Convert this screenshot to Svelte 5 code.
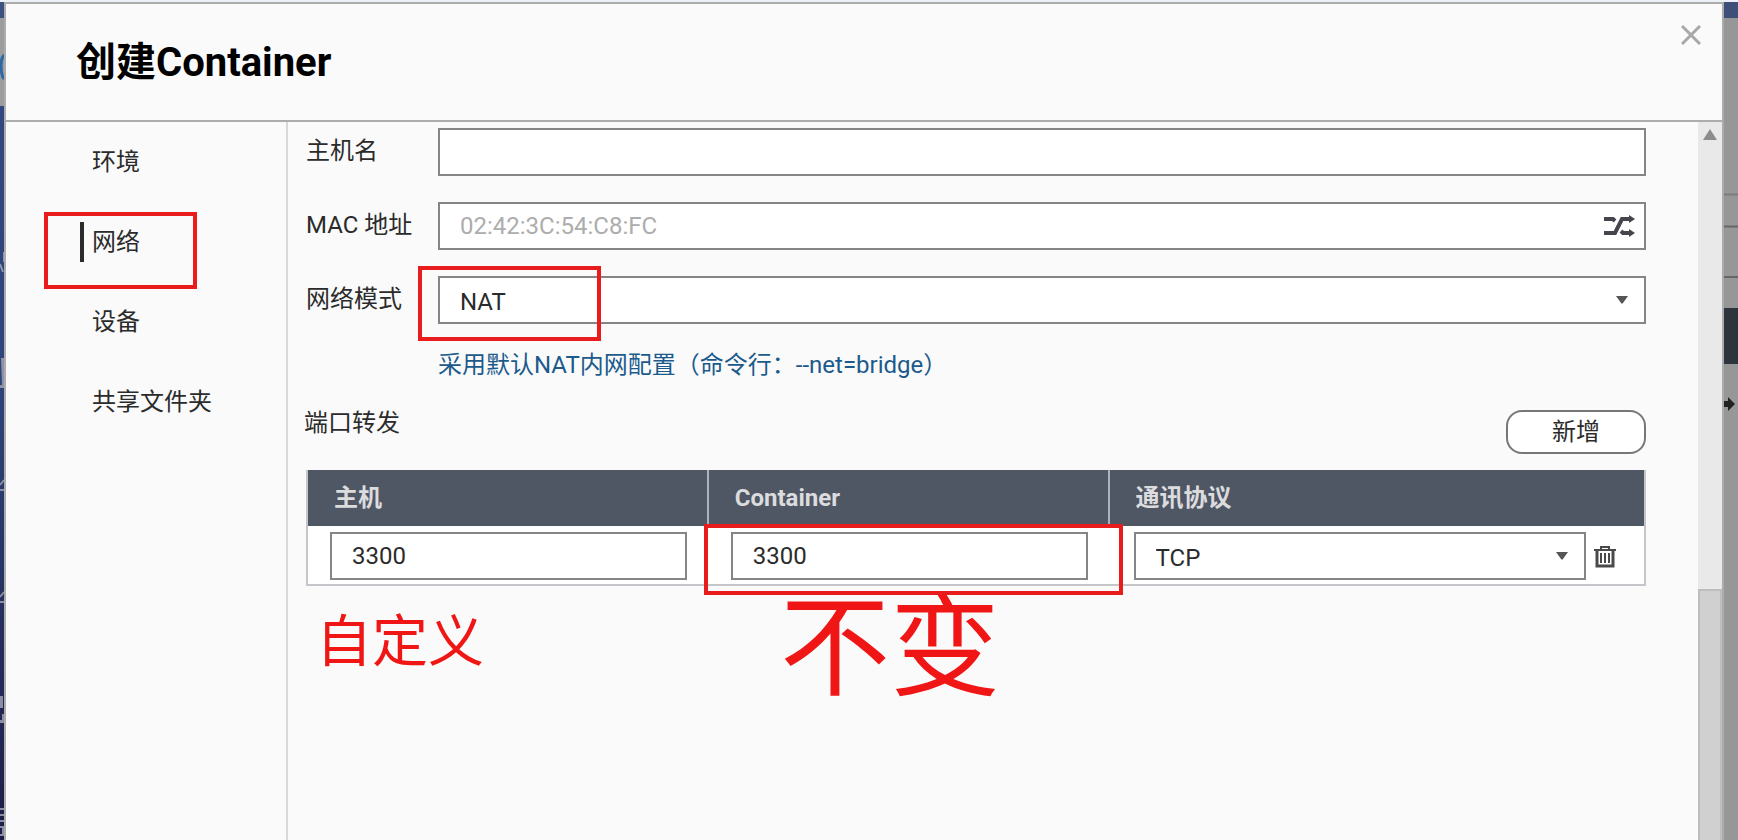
<script lang="ts">
  let hostname = $state("")
  let mac = $state("")
  let mode = $state("NAT")
  let active = $state("网络")

  const tabs = ["环境", "网络", "设备", "共享文件夹"]
  let ports = $state([{ host: "3300", container: "3300", protocol: "TCP" }])

  function addPort() {
    ports.push({ host: "", container: "", protocol: "TCP" })
  }

  function removePort(index: number) {
    ports.splice(index, 1)
  }
</script>

{#snippet caret()}
  <svg class="caret" viewBox="0 0 12 8" aria-hidden="true">
    <path fill="#555" d="M0 0H12L7 7Q6 8 5 7Z" />
  </svg>
{/snippet}

<div class="screen">
  <div class="desktop-left">
    <svg width="4" height="840" viewBox="0 0 4 840" aria-hidden="true">
      <rect width="4" height="18" fill="#3d5080" />
      <rect y="18" width="4" height="88" fill="#9c9c9c" />
      <path d="M4 55Q1 58 1 66Q1 75 4 79" fill="none" stroke="#2c6aa5" stroke-width="3" />
      <path d="M0 264L3 272M4 252V262" stroke="#8f96ad" stroke-width="2" />
      <path d="M1 358H4V388H0V385H2Z" fill="#8f93a8" />
      <path d="M0 485L4 480M0 490H4M0 597L4 592M0 602H4" stroke="#8d8fa5" stroke-width="2" />
      <path d="M0 696H3V708H0ZM2 714H4V723H0V720H2Z" fill="#8d8da3" />
      <path d="M0 809H4M0 815H4M0 821H4M0 827H3V835H0" fill="none" stroke="#8d8da3" stroke-width="2" />
    </svg>
  </div>

  <div class="dialog" role="dialog" aria-labelledby="title">
    <header>
      <h1 id="title">创建Container</h1>
      <button class="close" aria-label="关闭">
        <svg width="20" height="20" viewBox="0 0 20 20">
          <path d="M1 1L19 19M19 1L1 19" stroke="#a8a8a8" stroke-width="3" />
        </svg>
      </button>
    </header>

    <div class="body">
      <nav>
        {#each tabs as tab}
          <button class="tab" class:active={tab === active} onclick={() => (active = tab)}>
            {tab}
            {#if tab === "网络"}<span class="mark mark-tab"></span>{/if}
          </button>
        {/each}
      </nav>

      <main>
        <div class="row">
          <label for="hostname">主机名</label>
          <div class="field">
            <input id="hostname" bind:value={hostname} />
          </div>
        </div>
        <div class="row">
          <label for="mac">MAC 地址</label>
          <div class="field">
            <input id="mac" placeholder="02:42:3C:54:C8:FC" bind:value={mac} />
            <button class="shuffle" aria-label="随机生成">
              <svg width="32" height="22" viewBox="0 0 32 22" fill="none" stroke="#45454d" stroke-width="4">
                <path d="M0 4H9L11 6M0 18H11L18 4H26M17 16L19 18H26" />
                <path d="M25 0L31 4L25 8ZM25 14L31 18L25 22Z" fill="#45454d" stroke="none" />
              </svg>
            </button>
          </div>
        </div>
        <div class="row">
          <label for="mode">网络模式</label>
          <div class="field">
            <select id="mode" bind:value={mode}>
              <option>NAT</option>
              <option>Host</option>
              <option>Bridge</option>
            </select>
            {@render caret()}
            <span class="mark mark-mode"></span>
          </div>
        </div>
        <p class="hint">采用默认NAT内网配置（命令行：--net=bridge）</p>

        <div class="ports-head">
          <h2>端口转发</h2>
          <button class="add" onclick={addPort}>新增</button>
        </div>

        <table>
          <thead>
            <tr>
              <th class="col-host">主机</th>
              <th class="col-container">Container</th>
              <th>通讯协议</th>
            </tr>
          </thead>
          <tbody>
            {#each ports as port, i}
              <tr>
                <td><input aria-label="主机" bind:value={port.host} /></td>
                <td>
                  <input aria-label="Container" bind:value={port.container} />
                  {#if i === 0}<span class="mark mark-port"></span>{/if}
                </td>
                <td>
                  <div class="protocol">
                    <div class="field">
                      <select aria-label="通讯协议" bind:value={port.protocol}>
                        <option>TCP</option>
                        <option>UDP</option>
                      </select>
                      {@render caret()}
                    </div>
                    <button class="remove" aria-label="删除" onclick={() => removePort(i)}>
                      <svg width="22" height="24" viewBox="0 0 22 24" fill="none" stroke="#4a4a4a">
                        <path d="M0 6H22M7 6V3H15V6" stroke-width="2" />
                        <path d="M3 7V22H19V7" stroke-width="3" />
                        <path d="M7 9V19M11 9V19M15 9V19" stroke-width="2" />
                      </svg>
                    </button>
                  </div>
                </td>
              </tr>
            {/each}
          </tbody>
        </table>

        <div class="notes">
          <span class="note-host">自定义</span>
          <span class="note-container">不变</span>
        </div>
      </main>

      <div class="scrollbar">
        <svg width="14" height="11" viewBox="0 0 14 11" aria-hidden="true">
          <path fill="#8c8c8c" d="M7 0L14 11H0Z" />
        </svg>
        <div class="thumb"></div>
      </div>
    </div>
  </div>

  <div class="desktop-right">
    <svg width="14" height="840" viewBox="0 0 14 840" aria-hidden="true">
      <rect width="14" height="18" fill="#3e4f78" />
      <path d="M0 194.5H14" stroke="#7c7c7c" stroke-width="2" />
      <path d="M0 226.5H14M0 277H14" stroke="#666" stroke-width="2" />
      <rect y="308" width="14" height="56" fill="#2e343b" />
      <path fill="#222" d="M0 401H4V397L11 404L4 411V407H0Z" />
    </svg>
  </div>
</div>

<style>
  :global(body) {
    margin: 0;
    overflow: hidden;
  }

  .screen {
    display: flex;
    box-sizing: border-box;
    height: 100vh;
    border-top: 2px solid #eef1f8;
    font-family: Roboto, "Noto Sans CJK SC", sans-serif;
    font-size: 24px;
    line-height: 32px;
    color: #2b2b2b;
  }

  .desktop-left,
  .desktop-right {
    overflow: hidden;
  }

  .desktop-left svg,
  .desktop-right svg {
    display: block;
    margin-top: -2px;
  }

  .desktop-left {
    flex: 0 0 4px;
    background: linear-gradient(#34497f, #2f447a 45%, #1d1d46);
  }

  .desktop-right {
    flex: 0 0 14px;
    background: #979797;
  }

  .dialog {
    flex: 1;
    min-width: 0;
    display: flex;
    flex-direction: column;
    border: 2px solid #acacac;
    border-bottom: 0;
    background: #fafafa;
  }

  header {
    display: flex;
    justify-content: space-between;
    align-items: flex-start;
    padding: 21px 21px 31px 70px;
    border-bottom: 2px solid #acacac;
  }

  h1 {
    margin: 12px 0 0;
    font-size: 40px;
    line-height: 52px;
    font-weight: 700;
    color: #000;
  }

  button {
    padding: 0;
    border: 0;
    background: none;
    font: inherit;
    color: inherit;
    cursor: pointer;
  }

  button svg {
    display: block;
  }

  .body {
    flex: 1;
    display: flex;
    min-height: 0;
  }

  nav {
    flex: 0 0 280px;
    display: flex;
    flex-direction: column;
    gap: 40px;
    padding-top: 20px;
    border-right: 2px solid #d9d9d9;
  }

  .tab {
    position: relative;
    height: 40px;
    margin-left: 74px;
    padding-left: 8px;
    border-left: 4px solid transparent;
    text-align: left;
  }

  .tab.active {
    border-color: #2b2b2b;
  }

  main {
    flex: 1;
    min-width: 0;
    padding: 6px 52px 0 18px;
  }

  .row {
    display: flex;
    margin-bottom: 26px;
  }

  .row label {
    flex: 0 0 132px;
    padding-top: 7px;
    box-sizing: border-box;
  }

  .field {
    flex: 1;
    position: relative;
  }

  input,
  select {
    display: block;
    width: 100%;
    height: 48px;
    box-sizing: border-box;
    padding: 0 20px;
    border: 2px solid #858585;
    border-radius: 0;
    background: #fff;
    font: inherit;
    color: inherit;
  }

  select {
    padding-top: 4px;
    appearance: none;
  }

  input::placeholder {
    color: #adadad;
  }

  .caret {
    position: absolute;
    right: 18px;
    top: 20px;
    width: 12px;
    height: 8px;
    pointer-events: none;
  }

  .shuffle {
    position: absolute;
    right: 10px;
    top: 13px;
  }

  .hint {
    margin: -1px 0 0 132px;
    color: #1c5a8c;
  }

  .ports-head {
    display: flex;
    justify-content: space-between;
    margin: 29px 0 16px -2px;
  }

  h2 {
    margin: 0;
    font-size: 24px;
    font-weight: 400;
    line-height: 26px;
  }

  .add {
    width: 140px;
    height: 44px;
    border: 2px solid #777;
    border-radius: 16px;
    background: #fff;
  }

  table {
    width: 100%;
    table-layout: fixed;
    border-collapse: separate;
    border-spacing: 0;
    border: 2px solid #c6c6ca;
    border-top: 0;
    background: #fff;
  }

  th {
    height: 56px;
    padding: 0 26px;
    border-right: 2px solid #aab2c0;
    background: #4f5765;
    color: #dcdcde;
    font-weight: 700;
    text-align: left;
  }

  th:last-child {
    border-right: 0;
  }

  .col-host,
  .col-container {
    box-sizing: border-box;
    width: 30%;
  }

  td {
    position: relative;
    padding: 6px 22px 4px;
  }

  td:last-child {
    padding-left: 24px;
  }

  .protocol {
    display: flex;
    align-items: center;
    gap: 8px;
    padding-right: 6px;
  }

  /* red pen marks of the guide */
  .mark {
    position: absolute;
    box-sizing: border-box;
    border: 4px solid #e81c1c;
    pointer-events: none;
  }

  .mark-tab {
    left: -40px;
    top: -10px;
    width: 153px;
    height: 77px;
  }

  .mark-mode {
    left: -20px;
    top: -10px;
    width: 183px;
    height: 75px;
  }

  .mark-port {
    inset: -2px -13px -11px -5px;
    z-index: 1;
  }

  .notes {
    display: flex;
    align-items: flex-start;
    padding: 4px 0 0 10px;
    color: #f01616;
  }

  .note-host {
    flex: 0 0 464px;
    padding-top: 12px;
    font-size: 56px;
    line-height: 80px;
  }

  .note-container {
    font-size: 110px;
    line-height: 120px;
  }

  .scrollbar {
    flex: 0 0 24px;
    display: flex;
    flex-direction: column;
    align-items: center;
    background: #e9e9e9;
  }

  .scrollbar svg {
    margin-top: 7px;
  }

  .thumb {
    flex: 0 0 35%;
    box-sizing: border-box;
    width: 100%;
    margin-top: auto;
    border: 2px solid #bdbdbd;
    border-bottom: 0;
    background: #d0d0d0;
  }
</style>
